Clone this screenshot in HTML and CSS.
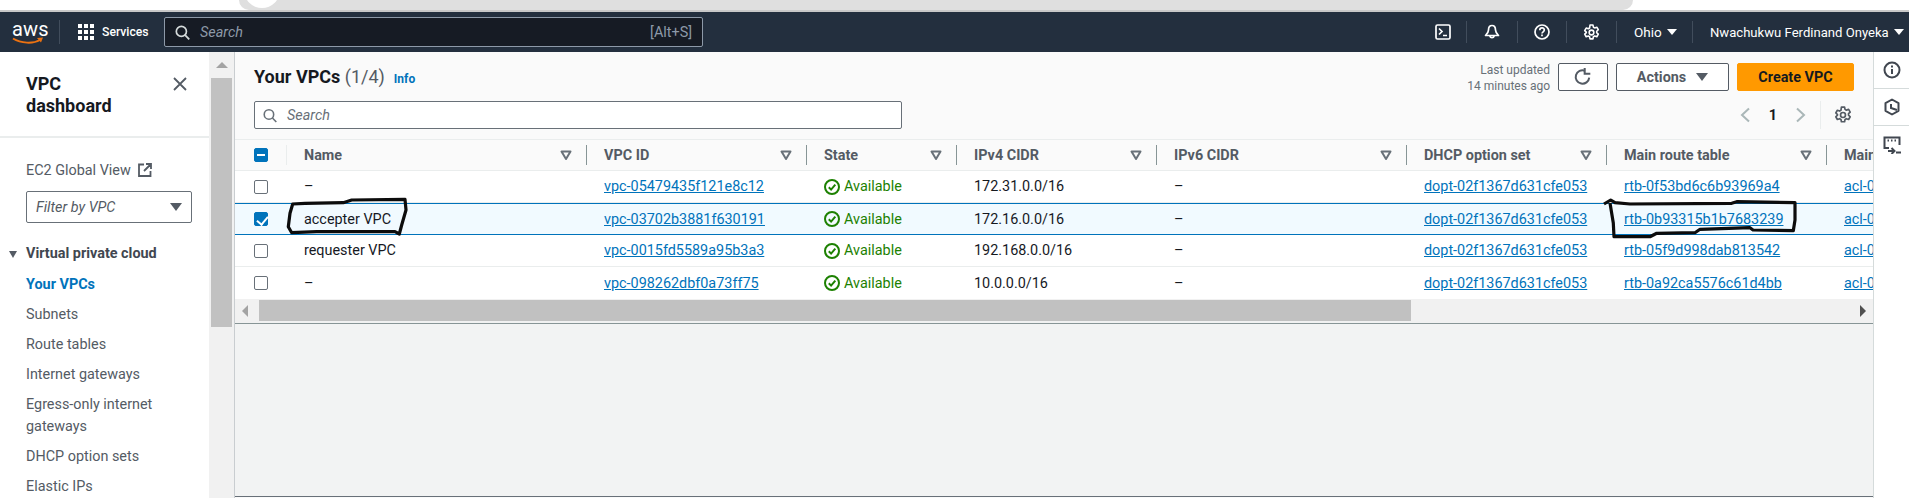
FILE: index.html
```html
<!DOCTYPE html>
<html lang="en">
<head>
  <meta charset="UTF-8" />
  <title>Your VPCs | VPC Console</title>
  <link rel="stylesheet" href="styles.css">
</head>
<body>
  <svg class="defs" width="0" height="0">
    <symbol id="gear" viewBox="0 0 16 16">
      <path d="M6.6 1h2.8l.4 2 1.2.7 2-.7 1.4 2.4-1.5 1.4v1.4l1.5 1.4-1.4 2.4-2-.7-1.2.7-.4 2H6.6l-.4-2-1.2-.7-2 .7-1.4-2.4 1.5-1.4V7.6L1.6 6.2 3 3.8l2 .7 1.2-.7z" fill="none" stroke="currentColor" stroke-width="1.5" stroke-linejoin="round"/>
      <circle cx="8" cy="8" r="2.2" fill="none" stroke="currentColor" stroke-width="1.5"/>
    </symbol>
    <symbol id="sort" viewBox="0 0 12 12">
      <path d="M1.5 2.5h9L6 10z" fill="none" stroke="currentColor" stroke-width="2" stroke-linejoin="round"/>
    </symbol>
    <symbol id="ok" viewBox="0 0 16 16">
      <circle cx="8" cy="8" r="7" fill="none" stroke="currentColor" stroke-width="2"/>
      <path d="M4.8 8.2l2.3 2.4 4.2-5" fill="none" stroke="currentColor" stroke-width="2"/>
    </symbol>
    <symbol id="search" viewBox="0 0 16 16">
      <circle cx="6.8" cy="6.8" r="5.4" fill="none" stroke="currentColor" stroke-width="1.8"/>
      <path d="M10.8 10.8l4.4 4.6" fill="none" stroke="currentColor" stroke-width="1.8"/>
    </symbol>
  </svg>

  <div class="browser-strip"><div class="browser-tab"><span class="browser-circle"></span></div></div>

  <header class="topnav">
    <div class="aws-logo">
      <span class="aws-word">aws</span>
      <svg class="aws-smile" viewBox="0 0 32 8" width="32" height="8">
        <path d="M1 1.5c8 5 20 5.500 27 1.500" fill="none" stroke="#ec7211" stroke-width="2"/>
        <path d="M25 1l6-.5-2 5z" fill="#ec7211"/>
      </svg>
    </div>
    <div class="services">
      <svg width="16" height="16" viewBox="0 0 16 16" fill="#fff">
        <rect width="4" height="4"/><rect x="6" width="4" height="4"/><rect x="12" width="4" height="4"/>
        <rect y="6" width="4" height="4"/><rect x="6" y="6" width="4" height="4"/><rect x="12" y="6" width="4" height="4"/>
        <rect y="12" width="4" height="4"/><rect x="6" y="12" width="4" height="4"/><rect x="12" y="12" width="4" height="4"/>
      </svg>
      <span>Services</span>
    </div>
    <div class="nav-search">
      <svg width="15" height="15"><use href="#search"/></svg>
      <span class="nav-search-text">Search</span>
      <span class="nav-search-key">[Alt+S]</span>
    </div>
    <div class="nav-right">
      <div class="nav-item nav-terminal">
        <svg width="16" height="16" viewBox="0 0 16 16" fill="none" stroke="#fff" stroke-width="1.7">
          <rect x="1" y="1" width="14" height="14" rx="1.500"/>
          <path d="M4 4.500L7 7.500 4 10.500M8 11.500h4"/>
        </svg>
      </div>
      <div class="nav-item nav-bell">
        <svg width="16" height="16" viewBox="0 0 16 16" fill="none" stroke="#fff" stroke-width="1.7">
          <path d="M8 1.500c-2.500 0-3.500 2-3.500 4.500 0 2.500-1 3.500-3 5.500h13c-2-2-3-3-3-5.500 0-2.500-1-4.500-3.500-4.500z" stroke-linejoin="round"/>
          <path d="M5.800 12a2.300 2.300 0 0 0 4.400 0"/>
        </svg>
      </div>
      <div class="nav-item nav-help">
        <svg width="16" height="16" viewBox="0 0 16 16" fill="none" stroke="#fff" stroke-width="1.7">
          <circle cx="8" cy="8" r="7"/>
          <path d="M5.800 6.200c0-3 4.500-3 4.500-.2 0 1.800-2.300 1.800-2.300 3.600M8 10.600v1.600"/>
        </svg>
      </div>
      <div class="nav-item nav-gear">
        <svg width="17" height="17" color="#fff"><use href="#gear"/></svg>
      </div>
      <div class="nav-item nav-region"><span>Ohio</span><i class="caret-white"></i></div>
      <div class="nav-item nav-user"><span>Nwachukwu Ferdinand Onyeka</span><i class="caret-white"></i></div>
    </div>
  </header>

  <div class="layout">
    <aside class="sidebar">
      <div class="side-head">
        <h2>VPC<br>dashboard</h2>
        <svg class="side-close" width="14" height="14" viewBox="0 0 14 14" fill="none" stroke="#545b64" stroke-width="1.800">
          <path d="M1 1l12 12M13 1L1 13"/>
        </svg>
      </div>
      <div class="side-body">
        <div class="global-view">
          <span>EC2 Global View</span>
          <svg width="14" height="14" viewBox="0 0 14 14" fill="none" stroke="#545b64" stroke-width="1.800">
            <path d="M6 1.500H1v11.500h11.500V8M8 1h5v5M13 1L6 8"/>
          </svg>
        </div>
        <div class="vpc-filter">
          <span>Filter by VPC</span>
          <i class="caret-dark"></i>
        </div>
        <div class="side-section"><i class="caret-dark caret-small"></i>Virtual private cloud</div>
        <ul class="side-links">
          <li class="active">Your VPCs</li>
          <li>Subnets</li>
          <li>Route tables</li>
          <li>Internet gateways</li>
          <li>Egress-only internet gateways</li>
          <li>DHCP option sets</li>
          <li>Elastic IPs</li>
        </ul>
      </div>
    </aside>

    <div class="side-scroll">
      <i class="arrow-up"></i>
      <div class="side-thumb"></div>
    </div>

    <main class="content">
      <div class="toolbar">
        <div class="toolbar-row">
          <div class="title">
            <h1>Your VPCs <span class="count">(1/4)</span></h1>
            <a class="info">Info</a>
          </div>
          <div class="actions">
            <div class="updated">Last updated<br>14 minutes ago</div>
            <button class="btn btn-refresh">
              <svg width="18" height="18" viewBox="0 0 16 16" fill="none" stroke="#545b64" stroke-width="1.800">
                <path d="M13.500 8.500A6 6 0 1 1 9.800 2.400"/>
                <path d="M9.500 0v5.200h5"/>
              </svg>
            </button>
            <button class="btn btn-actions">Actions<i class="caret-dark"></i></button>
            <button class="btn btn-primary">Create VPC</button>
          </div>
        </div>
        <div class="toolbar-row toolbar-row2">
          <div class="table-search">
            <svg width="14" height="15" color="#687078"><use href="#search"/></svg>
            <span>Search</span>
          </div>
          <div class="pager">
            <svg width="10" height="16" viewBox="0 0 10 16" fill="none" stroke="#aab7b8" stroke-width="2"><path d="M9 1.500L2 8l7 6.500"/></svg>
            <b>1</b>
            <svg width="10" height="16" viewBox="0 0 10 16" fill="none" stroke="#aab7b8" stroke-width="2"><path d="M1 1.500L8 8l-7 6.500"/></svg>
            <span class="pager-gear"><svg width="18" height="18" color="#545b64"><use href="#gear"/></svg></span>
          </div>
        </div>
      </div>

      <div class="table-wrap">
        <table class="vpc-table">
          <colgroup>
            <col class="c-check"><col class="c-name"><col class="c-id"><col class="c-state">
            <col class="c-ipv4"><col class="c-ipv6"><col class="c-dhcp"><col class="c-route"><col class="c-acl">
          </colgroup>
          <thead>
            <tr>
              <th><div class="th-check"><span class="check check-minus"></span></div></th>
              <th><div class="th">Name<svg width="12" height="12"><use href="#sort"/></svg></div></th>
              <th><div class="th">VPC ID<svg width="12" height="12"><use href="#sort"/></svg></div></th>
              <th><div class="th">State<svg width="12" height="12"><use href="#sort"/></svg></div></th>
              <th><div class="th">IPv4 CIDR<svg width="12" height="12"><use href="#sort"/></svg></div></th>
              <th><div class="th">IPv6 CIDR<svg width="12" height="12"><use href="#sort"/></svg></div></th>
              <th><div class="th">DHCP option set<svg width="12" height="12"><use href="#sort"/></svg></div></th>
              <th><div class="th">Main route table<svg width="12" height="12"><use href="#sort"/></svg></div></th>
              <th><div class="th">Main</div></th>
            </tr>
          </thead>
          <tbody>
            <tr>
              <td class="cell-check"><span class="check"></span></td>
              <td>–</td>
              <td><a>vpc-05479435f121e8c12</a></td>
              <td><span class="state"><svg width="16" height="16"><use href="#ok"/></svg>Available</span></td>
              <td>172.31.0.0/16</td>
              <td>–</td>
              <td><a>dopt-02f1367d631cfe053</a></td>
              <td><a>rtb-0f53bd6c6b93969a4</a></td>
              <td><a class="link-cut">acl-0</a></td>
            </tr>
            <tr class="selected">
              <td class="cell-check"><span class="check check-on"></span></td>
              <td>accepter VPC</td>
              <td><a>vpc-03702b3881f630191</a></td>
              <td><span class="state"><svg width="16" height="16"><use href="#ok"/></svg>Available</span></td>
              <td>172.16.0.0/16</td>
              <td>–</td>
              <td><a>dopt-02f1367d631cfe053</a></td>
              <td><a>rtb-0b93315b1b7683239</a></td>
              <td><a class="link-cut">acl-0</a></td>
            </tr>
            <tr>
              <td class="cell-check"><span class="check"></span></td>
              <td>requester VPC</td>
              <td><a>vpc-0015fd5589a95b3a3</a></td>
              <td><span class="state"><svg width="16" height="16"><use href="#ok"/></svg>Available</span></td>
              <td>192.168.0.0/16</td>
              <td>–</td>
              <td><a>dopt-02f1367d631cfe053</a></td>
              <td><a>rtb-05f9d998dab813542</a></td>
              <td><a class="link-cut">acl-0</a></td>
            </tr>
            <tr>
              <td class="cell-check"><span class="check"></span></td>
              <td>–</td>
              <td><a>vpc-098262dbf0a73ff75</a></td>
              <td><span class="state"><svg width="16" height="16"><use href="#ok"/></svg>Available</span></td>
              <td>10.0.0.0/16</td>
              <td>–</td>
              <td><a>dopt-02f1367d631cfe053</a></td>
              <td><a>rtb-0a92ca5576c61d4bb</a></td>
              <td><a class="link-cut">acl-0</a></td>
            </tr>
          </tbody>
        </table>
      </div>

      <div class="hscroll">
        <i class="arrow-left"></i>
        <div class="hscroll-thumb"></div>
        <i class="arrow-right"></i>
      </div>
      <div class="empty-area"></div>
    </main>

    <aside class="rail">
      <div class="rail-btn">
        <svg width="18" height="18" viewBox="0 0 18 18" fill="none" stroke="#414750" stroke-width="2">
          <circle cx="9" cy="9" r="7.500"/><path d="M9 8v5M9 4.500v2"/>
        </svg>
      </div>
      <div class="rail-btn">
        <svg width="18" height="18" viewBox="0 0 18 18" fill="none" stroke="#414750" stroke-width="2">
          <path d="M9 1.500l6.500 3.700v7.600L9 16.500l-6.500-3.700V5.200z" stroke-linejoin="round"/>
          <path d="M8 6v4l6 2" />
        </svg>
      </div>
      <div class="rail-btn">
        <svg width="18" height="18" viewBox="0 0 18 18" fill="none" stroke="#414750" stroke-width="2">
          <path d="M6 12H1.500V1.500h15V9"/><path d="M4.500 4.500h1.500M8 4.500h1.500M11.500 4.500H13"/>
          <path d="M5 15h6M8.500 12l3 3-3 3M13 16.500h5"/>
        </svg>
      </div>
    </aside>
  </div>

  <!-- pen marks someone drew over the screenshot -->
  <svg class="scribbles" width="1909" height="498" fill="none" stroke="#0c0c0c" stroke-width="3.200" stroke-linejoin="round">
    <path d="M292.700 204L305 203.300 343.300 202.700 351.700 200 405 199.300 406 210 401.700 225 399.300 234 395 231.700 343.300 231.700 316.700 231.700 291.700 232.700 288.300 226.700 290 213.300z"/>
    <path d="M1604 204L1610.700 200 1615 202.700 1630 204 1731.700 203.300 1736.700 201.700 1795 202.700 1795 220 1793.300 230.700 1753 230 1750 227.700 1700 229.300 1695 232.700 1656.700 233.300 1650 236.700 1614 236.700 1613.300 223 1610 203"/>
  </svg>
</body>
</html>
```

FILE: styles.css
```css
* {
  margin: 0;
  padding: 0;
  box-sizing: border-box;
  font-family: Roboto, "Liberation Sans", sans-serif;
}

html, body {
  height: 498px;
  overflow: hidden;
  background: #fff;
}

.defs {
  position: absolute;
}

.scribbles {
  position: absolute;
  top: 0;
  left: 0;
  pointer-events: none;
}

i {
  display: block;
}

/* browser leftovers at the top */
.browser-strip {
  height: 10px;
  background: #fff;
  overflow: hidden;
}

.browser-tab {
  position: relative;
  width: 1394px;
  height: 10px;
  margin-left: 239px;
  background: #dfdfdf;
  border-radius: 0 0 30px 30px;
}

.browser-circle {
  position: absolute;
  left: 5px;
  top: -28px;
  width: 36px;
  height: 36px;
  border-radius: 50%;
  background: #fff;
}

/* top nav */
.topnav {
  height: 42px;
  display: flex;
  align-items: center;
  background: #232f3e;
  border-top: 2px solid #c8c8c8;
  color: #fff;
}

.aws-logo {
  width: 60px;
  height: 24px;
  padding-left: 12px;
  border-right: 1px solid #414d5c;
}

.aws-word {
  display: block;
  font-size: 20px;
  line-height: 18px;
  letter-spacing: 0.2px;
}

.aws-smile {
  display: block;
  margin-top: -1px;
}

.services {
  display: flex;
  align-items: center;
  gap: 8px;
  margin-left: 18px;
  width: 86px;
  font-size: 12.2px;
  font-weight: 500;
}

.nav-search {
  width: 539px;
  height: 30px;
  display: flex;
  align-items: center;
  padding: 0 10px;
  background: #161b24;
  border: 1px solid #8d99a8;
  border-radius: 2px;
  color: #d5dbdb;
  font-size: 14.4px;
}

.nav-search-text {
  margin-left: 10px;
  font-style: italic;
  color: #8d99a8;
}

.nav-search-key {
  margin-left: auto;
  color: #8d99a8;
}

.nav-right {
  margin-left: auto;
  display: flex;
  align-items: center;
  height: 22px;
}

.nav-item {
  height: 22px;
  display: flex;
  align-items: center;
  justify-content: center;
  border-right: 1px solid #414d5c;
  font-size: 13.5px;
  white-space: nowrap;
}

.nav-terminal { width: 48px; }
.nav-bell { width: 51px; }
.nav-help { width: 49px; }
.nav-gear { width: 50px; }

.nav-region {
  width: 76px;
  justify-content: flex-start;
  padding-left: 17px;
  gap: 5px;
}

.nav-user {
  width: 216px;
  justify-content: flex-start;
  padding-left: 17px;
  gap: 5px;
  border-right: none;
  font-size: 13.1px;
}

.caret-white {
  width: 0;
  height: 0;
  border-left: 5px solid transparent;
  border-right: 5px solid transparent;
  border-top: 6px solid #fff;
}

.caret-dark {
  width: 0;
  height: 0;
  border-left: 6px solid transparent;
  border-right: 6px solid transparent;
  border-top: 8px solid #545b64;
}

.caret-small {
  border-left-width: 4px;
  border-right-width: 4px;
  border-top-width: 7px;
}

/* main layout */
.layout {
  display: flex;
  height: 446px;
}

.sidebar {
  width: 209px;
  flex-shrink: 0;
  overflow: hidden;
  background: #fff;
  color: #545b64;
}

.side-head {
  height: 86px;
  padding: 21px 22px 0 26px;
  display: flex;
  justify-content: space-between;
  align-items: flex-start;
  border-bottom: 2px solid #eaeded;
}

.side-head h2 {
  font-size: 18px;
  line-height: 22px;
  font-weight: 700;
  color: #16191f;
}

.side-close {
  margin-top: 4px;
}

.side-body {
  padding: 21px 0 0 26px;
  font-size: 14.4px;
}

.global-view {
  display: flex;
  align-items: center;
  gap: 7px;
  height: 22px;
}

.vpc-filter {
  width: 166px;
  height: 32px;
  margin-top: 10px;
  padding: 0 9px;
  display: flex;
  align-items: center;
  justify-content: space-between;
  border: 1px solid #687078;
  border-radius: 2px;
  font-style: italic;
}

.side-section {
  margin: 20px 0 9px -17px;
  display: flex;
  align-items: center;
  gap: 9px;
  line-height: 22px;
  font-weight: 700;
  color: #414750;
}

.side-links {
  list-style: none;
}

.side-links li {
  line-height: 22px;
  margin-bottom: 8px;
  width: 135px;
}

.side-links .active {
  color: #0073bb;
  font-weight: 700;
}

.side-scroll {
  width: 26px;
  flex-shrink: 0;
  padding: 10px 2px 0 2px;
  background: #f1f1f1;
  border-right: 1px solid #c9cdd0;
}

.arrow-up {
  width: 0;
  height: 0;
  margin: 0 auto;
  border-left: 6px solid transparent;
  border-right: 6px solid transparent;
  border-bottom: 6px solid #a3a3a3;
}

.side-thumb {
  height: 249px;
  margin-top: 10px;
  background: #c1c1c1;
}

.content {
  flex: 1;
  min-width: 0;
  display: flex;
  flex-direction: column;
  background: #fafafa;
}

.toolbar {
  padding: 11px 19px 10px;
}

.toolbar-row {
  height: 28px;
  display: flex;
  align-items: center;
  justify-content: space-between;
}

.toolbar-row2 {
  margin-top: 10px;
}

.title {
  display: flex;
  align-items: baseline;
  gap: 9px;
  margin-top: -2px;
}

h1 {
  font-size: 18px;
  font-weight: 700;
  color: #16191f;
}

.count {
  font-weight: 400;
  color: #545b64;
}

.info {
  font-size: 12px;
  font-weight: 700;
  color: #0073bb;
}

.actions {
  display: flex;
  align-items: center;
  gap: 8px;
}

.updated {
  font-size: 12px;
  line-height: 16px;
  text-align: right;
  color: #687078;
  margin-top: 2px;
}

.btn {
  height: 28px;
  display: flex;
  align-items: center;
  justify-content: center;
  border: 1px solid #545b64;
  border-radius: 2px;
  background: #fff;
  color: #545b64;
  font-size: 14.4px;
  font-weight: 700;
}

.btn-refresh {
  width: 50px;
}

.btn-actions {
  width: 113px;
  gap: 10px;
}

.btn-primary {
  width: 117px;
  background: #ff9900;
  border-color: #ff9900;
  color: #16191f;
}

.table-search {
  width: 648px;
  height: 28px;
  display: flex;
  align-items: center;
  gap: 10px;
  padding: 0 8px;
  background: #fff;
  border: 1px solid #687078;
  border-radius: 2px;
  font-size: 14.4px;
  font-style: italic;
  color: #687078;
}

.pager {
  display: flex;
  align-items: center;
  height: 28px;
}

.pager b {
  width: 46px;
  text-align: center;
  font-size: 14.4px;
  color: #16191f;
}

.pager-gear {
  display: flex;
  align-items: center;
  height: 28px;
  margin-left: 14px;
  padding: 0 2px 0 13px;
  border-left: 1px solid #eaeded;
}

/* table */
.table-wrap {
  overflow: hidden;
}

.vpc-table {
  width: 1792px;
  table-layout: fixed;
  border-collapse: separate;
  border-spacing: 0;
  font-size: 14.4px;
  color: #16191f;
}

.c-check { width: 52px; }
.c-name { width: 300px; }
.c-id { width: 220px; }
.c-state { width: 150px; }
.c-ipv4 { width: 200px; }
.c-ipv6 { width: 250px; }
.c-dhcp { width: 200px; }
.c-route { width: 220px; }
.c-acl { width: 200px; }

.vpc-table th {
  height: 32px;
  padding: 0;
  background: #fafafa;
  border-top: 1px solid #eaeded;
  border-bottom: 1px solid #eaeded;
}

.th {
  height: 20px;
  display: flex;
  align-items: center;
  justify-content: space-between;
  padding: 0 14px 0 17px;
  border-right: 1px solid #879596;
  color: #545b64;
  font-weight: 700;
  text-align: left;
}

.th svg {
  color: #687078;
}

.th-check {
  height: 20px;
  display: flex;
  align-items: center;
  padding-left: 19px;
  border-right: 1px solid #eaeded;
}

.vpc-table td {
  height: 32px;
  padding: 0 0 0 17px;
  background: #fff;
  border-bottom: 1px solid #eaeded;
  white-space: nowrap;
}

.vpc-table tr:last-child td {
  border-bottom: none;
}

.vpc-table .selected td {
  background: #f1faff;
  box-shadow: inset 0 1px 0 #0073bb, inset 0 -1px 0 #0073bb;
  border-bottom: none;
}

.vpc-table .cell-check {
  padding-left: 19px;
}

.vpc-table a {
  color: #0073bb;
  text-decoration: underline;
}

.link-cut {
  display: inline-block;
  width: 60px;
}

.check {
  display: block;
  position: relative;
  width: 14px;
  height: 14px;
  background: #fff;
  border: 1px solid #687078;
  border-radius: 2px;
}

.check-on,
.check-minus {
  background: #0073bb;
  border-color: #0073bb;
}

.check-on::after {
  content: "";
  position: absolute;
  left: 3.500px;
  top: 0.500px;
  width: 5px;
  height: 9px;
  border: solid #fff;
  border-width: 0 2px 2px 0;
  transform: rotate(40deg);
}

.check-minus::after {
  content: "";
  position: absolute;
  left: 2px;
  top: 5px;
  width: 8px;
  height: 2px;
  background: #fff;
}

.state {
  display: flex;
  align-items: center;
  gap: 4px;
  color: #1d8102;
}

/* horizontal scrollbar */
.hscroll {
  height: 25px;
  display: flex;
  align-items: center;
  background: #f1f1f1;
  border-bottom: 1px solid #879596;
  padding-bottom: 1px;
}

.arrow-left {
  width: 0;
  height: 0;
  margin: 0 11px 0 7px;
  border-top: 6px solid transparent;
  border-bottom: 6px solid transparent;
  border-right: 6px solid #a3a3a3;
}

.hscroll-thumb {
  width: 1152px;
  height: 21px;
  background: #c1c1c1;
}

.arrow-right {
  width: 0;
  height: 0;
  margin: 0 7px 0 auto;
  border-top: 6px solid transparent;
  border-bottom: 6px solid transparent;
  border-left: 6px solid #505050;
}

.empty-area {
  flex: 1;
  margin-bottom: 1px;
  background: #f2f3f3;
  border-bottom: 1px solid #687078;
}

/* right rail */
.rail {
  width: 36px;
  flex-shrink: 0;
  background: #fff;
  border-left: 1px solid #d5dbdb;
}

.rail-btn {
  height: 37px;
  display: flex;
  align-items: center;
  justify-content: center;
  border-bottom: 1px solid #d5dbdb;
}

.rail-btn:last-child {
  border-bottom: none;
}
```
